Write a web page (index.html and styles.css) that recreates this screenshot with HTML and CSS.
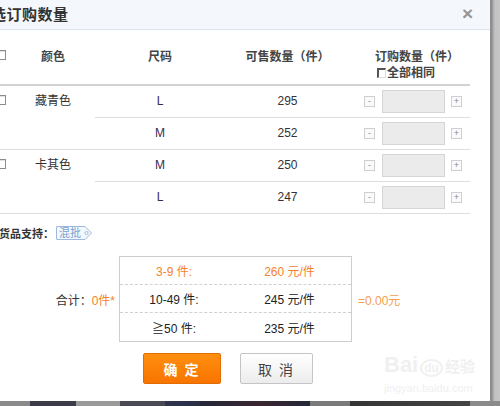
FILE: index.html
```html
<!DOCTYPE html>
<html lang="zh">
<head>
<meta charset="utf-8">
<title>订购数量</title>
<link rel="stylesheet" href="styles.css">
</head>
<body>
<div class="screen">
  <div class="main">
    <div class="dialog">
      <div class="inner">
        <div class="header">
          <span class="title">选订购数量</span>
          <span class="close">×</span>
        </div>

        <div class="grid">
          <div class="th c1"><span class="cb"></span></div>
          <div class="th c2">颜色</div>
          <div class="th c3">尺码</div>
          <div class="th c4">可售数量（件）</div>
          <div class="th c5">
            <div>订购数量（件）</div>
            <div class="same"><span class="cb-inset"></span>全部相同</div>
          </div>

          <div class="td c1 span2"><span class="cb"></span></div>
          <div class="td c2 span2 color">藏青色</div>
          <div class="td c3">L</div>
          <div class="td c4">295</div>
          <div class="td c5"><span class="step">-</span><span class="qty"></span><span class="step">+</span></div>
          <div class="td c3">M</div>
          <div class="td c4">252</div>
          <div class="td c5"><span class="step">-</span><span class="qty"></span><span class="step">+</span></div>

          <div class="td c1 span2"><span class="cb"></span></div>
          <div class="td c2 span2 color">卡其色</div>
          <div class="td c3">M</div>
          <div class="td c4">250</div>
          <div class="td c5"><span class="step">-</span><span class="qty"></span><span class="step">+</span></div>
          <div class="td c3">L</div>
          <div class="td c4">247</div>
          <div class="td c5"><span class="step">-</span><span class="qty"></span><span class="step">+</span></div>
        </div>

        <div class="support">
          <span class="support-label">货品支持：</span>
          <span class="tag"><span class="tag-body">混批</span><svg class="tag-end" width="10" height="14" viewBox="0 0 10 14"><path d="M0 0.5 H3 L9.5 7 L3 13.5 H0" fill="#f3f8fd" stroke="#9db9db" stroke-width="1"/><circle cx="4.5" cy="7" r="1.6" fill="none" stroke="#9db9db" stroke-width="0.9"/></svg></span>
        </div>

        <div class="summary">
          <div class="sum-label">合计：<span class="orange">0件*</span></div>
          <div class="price-box">
            <div class="price-row hot"><span>3-9 件:</span><span>260 元/件</span></div>
            <div class="price-row"><span>10-49 件:</span><span>245 元/件</span></div>
            <div class="price-row"><span>≧50 件:</span><span>235 元/件</span></div>
          </div>
          <div class="sum-result">=0.00元</div>
        </div>

        <div class="actions">
          <button class="btn btn-ok">确 定</button>
          <button class="btn btn-cancel">取 消</button>
        </div>
      </div>
      <div class="watermark">
        <div class="wm-logo"><span>Bai</span><span class="wm-du">du</span><span class="wm-jy">经验</span></div>
        <div class="wm-url">jingyan.baidu.com</div>
      </div>
    </div>
    <div class="edge"></div>
  </div>
  <div class="strip"></div>
</div>
</body>
</html>
```

FILE: styles.css
```css
* { box-sizing: border-box; }

html, body {
  margin: 0;
  padding: 0;
  background: #fff;
}

body {
  font-family: "Liberation Sans", "Noto Sans CJK SC", sans-serif;
  font-size: 12px;
  color: #333;
}

.screen {
  width: 500px;
  height: 406px;
  overflow: hidden;
  display: flex;
  flex-direction: column;
}

.main {
  height: 401px;
  display: flex;
}

.dialog {
  position: relative;
  flex: 1;
  background: #fff;
  overflow: hidden;
}

.inner {
  margin-left: -10px;
  width: 500px;
}

.edge {
  width: 10px;
  background: linear-gradient(to right, #8e8e8e 0, #8e8e8e 2px, #a9a9a9 3px, #c3c3c3 5px, #c6c6c6 10px);
}

.strip {
  height: 5px;
  background: linear-gradient(to right,
    #8a8a8a 0, #8a8a8a 30px,
    #3c3c48 30px, #3c3c48 76px,
    #9a9a9a 76px, #9a9a9a 120px,
    #4a4a55 120px, #4a4a55 165px,
    #2f3550 165px, #2a2f45 200px,
    #232838 200px, #3a2530 260px, #232838 310px,
    #7a7a7a 310px, #7a7a7a 350px,
    #353535 350px, #444 470px,
    #8a8a8a 470px, #8a8a8a 500px);
}

/* header */
.header {
  height: 30px;
  background: #f4f7fb;
  border-bottom: 1px solid #dbe4ee;
  display: flex;
  align-items: center;
  justify-content: space-between;
  padding: 0 17px 2px 1px;
}

.title {
  font-size: 15px;
  font-weight: bold;
  color: #333;
  letter-spacing: 0.5px;
}

.close {
  font-size: 19px;
  font-weight: bold;
  color: #959595;
  line-height: 1;
}

/* grid table */
.grid {
  margin-left: 1px;
  width: 479px;
  display: grid;
  grid-template-columns: 20px 84px 130px 125px 120px;
  grid-template-rows: 56px 32px 32px 32px 32px;
}

.th {
  height: 56px;
  border-bottom: 2px solid #d2d2d2;
  padding-top: 19px;
  line-height: 16px;
  font-weight: bold;
  color: #444;
  text-align: center;
}

.th.c1 { padding-top: 20px; padding-left: 5px; text-align: left; }
.th.c5 { text-align: left; padding-left: 25px; }

.same {
  display: flex;
  align-items: center;
  margin-left: 2px;
}

.td {
  border-bottom: 1px solid #dedede;
  line-height: 31px;
  text-align: center;
  color: #333;
}

.td.span2 { grid-row: span 2; }

.td.c1 { padding-left: 5px; padding-top: 9px; text-align: left; line-height: 1; }
.td.c3 { color: #3a2a5a; }

.td.c5 {
  display: flex;
  align-items: center;
  padding-left: 14px;
}

.cb {
  display: block;
  width: 10px;
  height: 10px;
  border: 1px solid #8c8c8c;
  background: #fff;
  box-shadow: inset 1px 1px 0 #e0e0e0;
}

.cb-inset {
  display: inline-block;
  width: 9px;
  height: 10px;
  border-left: 2px solid #555;
  border-top: 2px solid #555;
  border-right: 1px solid #ddd;
  border-bottom: 1px solid #ddd;
  margin-right: 1px;
}

.step {
  width: 11px;
  height: 11px;
  border: 1px solid #cfcfcf;
  background: #fafafa;
  color: #888;
  font-size: 9px;
  line-height: 9px;
  text-align: center;
}

.qty {
  width: 63px;
  height: 23px;
  margin: 0 6px 0 7px;
  background: #ebebeb;
  border: 1px solid #d6d6d6;
}

/* support */
.support {
  margin: 10px 0 0 9px;
  height: 18px;
  display: flex;
  align-items: center;
}

.support-label {
  font-size: 11px;
  font-weight: bold;
  color: #333;
}

.tag {
  display: inline-flex;
  align-items: center;
  margin-left: 2px;
}

.tag-body {
  height: 14px;
  line-height: 12px;
  padding: 0 1px 0 2px;
  border: 1px solid #9db9db;
  border-right: none;
  border-radius: 2px 0 0 2px;
  background: #f3f8fd;
  color: #7a9fce;
  font-size: 11px;
}

.tag-end { display: block; }

/* summary */
.summary {
  margin-top: 14px;
  display: flex;
  align-items: center;
}

.sum-label {
  width: 129px;
  text-align: right;
  padding-right: 4px;
  color: #333;
}

.orange { color: #f5822a; }

.price-box {
  width: 233px;
  border: 1px solid #cdcdcd;
}

.price-row {
  height: 28px;
  display: grid;
  grid-template-columns: 108px 1fr;
  align-items: center;
  text-align: center;
  border-bottom: 1px dashed #d0d0d0;
  font-size: 12px;
  color: #222;
}

.price-row:last-child { border-bottom: none; }

.price-row.hot { color: #f5822a; }

.sum-result {
  margin-left: 6px;
  color: #f5a04a;
}

/* actions */
.actions {
  margin: 11px 0 0 153px;
  display: flex;
  gap: 19px;
}

.btn {
  height: 31px;
  font-family: "Noto Sans CJK SC", "Liberation Sans", sans-serif;
  font-size: 14px;
  border-radius: 2px;
  padding: 0;
  letter-spacing: 2px;
}

.btn-ok {
  width: 78px;
  border: 1px solid #e36c00;
  background: linear-gradient(#ff8f10, #f87400);
  color: #fff;
  font-weight: bold;
}

.btn-cancel {
  width: 73px;
  border: 1px solid #c4c4c4;
  background: linear-gradient(#ffffff, #ececec);
  color: #444;
}

/* watermark overlay */
.watermark {
  position: absolute;
  left: 384px;
  top: 352px;
  color: #f0f0f0;
}

.wm-logo {
  display: flex;
  align-items: baseline;
  font-family: "Liberation Sans", sans-serif;
  font-size: 22px;
  font-weight: bold;
  line-height: 26px;
}

.wm-du {
  font-size: 12px;
  margin: 0 2px;
  border: 2px solid #f0f0f0;
  border-radius: 50%;
  padding: 0 2px;
  line-height: 14px;
}

.wm-jy {
  font-family: "Noto Sans CJK SC", sans-serif;
  font-size: 15px;
}

.wm-url {
  font-size: 11px;
  line-height: 14px;
  margin-top: 2px;
}
```
